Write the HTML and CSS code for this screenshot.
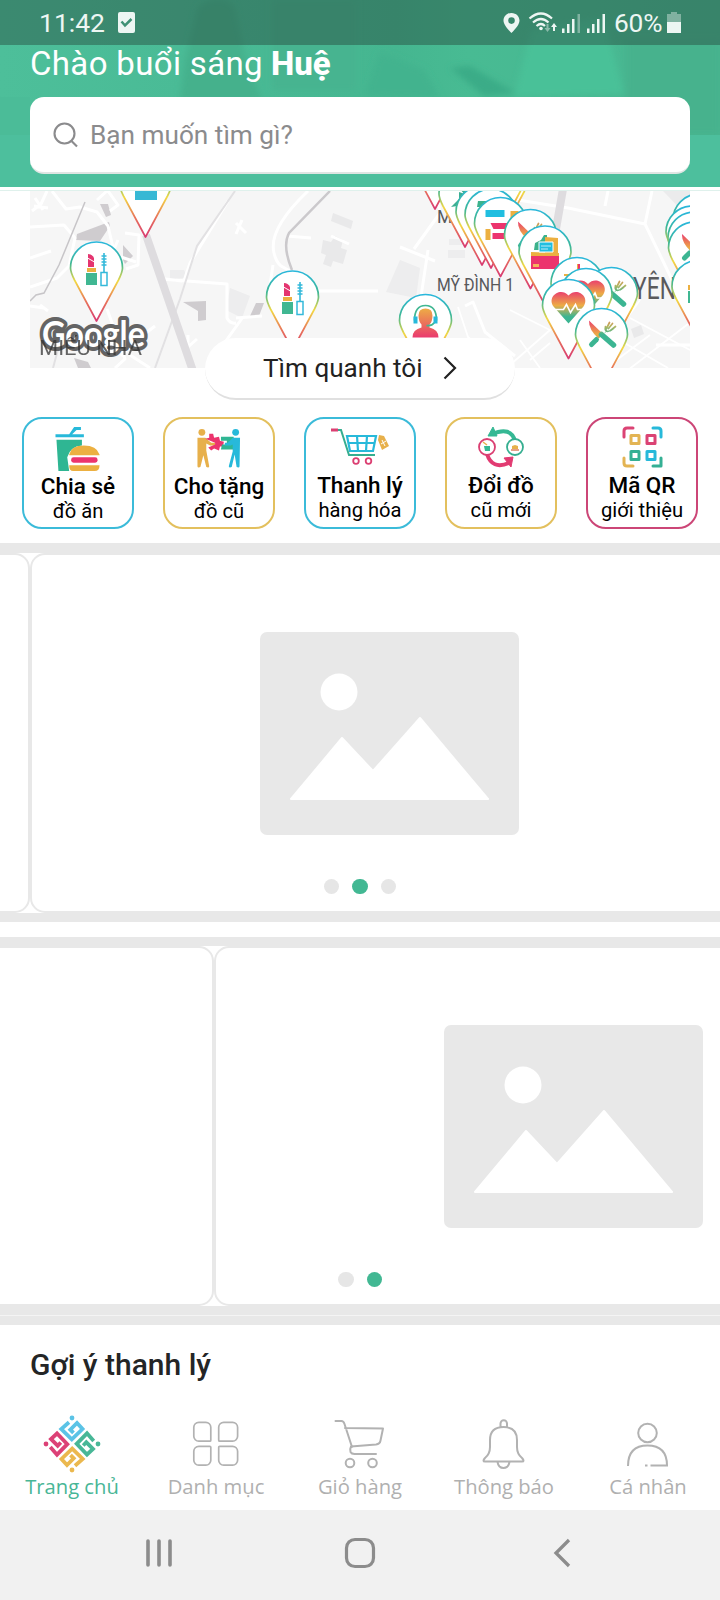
FILE: index.html
```
<!DOCTYPE html>
<html lang="vi">
<head>
<meta charset="utf-8">
<title>Trang chủ</title>
<link rel="stylesheet" href="styles.css">
</head>
<body>
<div class="phone">
  <header class="header">
    <svg class="header-photo" width="720" height="135" viewBox="0 0 720 135" aria-hidden="true">
      <defs>
        <linearGradient id="shade" x1="0" x2="1" y1="0" y2="0">
          <stop offset="0" stop-color="#4dbf9a"/><stop offset=".25" stop-color="#4abb96"/><stop offset=".55" stop-color="#45b690"/><stop offset=".65" stop-color="#48bb93"/><stop offset="1" stop-color="#48b590"/>
        </linearGradient>
        <filter id="soft"><feGaussianBlur stdDeviation="3"/></filter>
      </defs>
      <rect width="720" height="135" fill="url(#shade)"/>
      <g filter="url(#soft)">
        <path d="M185 60L198 8Q216-8 234 6L246 60 262 100H180z" fill="#44b18c"/>
        <path d="M272 0h84v90h-84z" fill="#46b490"/>
        <path d="M365 95L380 52 424 70 440 98z" fill="#42b38e"/>
        <path d="M450 68l20-2 46 27-32 3z" fill="#3bac87"/>
        <path d="M514 97L532 30 604 18 624 94z" fill="#4ac198"/>
        <path d="M626 40h94v95h-94z" fill="#46b28d"/>
      </g>
      <rect y="97" width="30" height="38" fill="#4bbc98"/>
    </svg>
    <div class="status">
      <span class="clock">11:42</span>
      <svg class="check" width="17" height="21" viewBox="0 0 17 21"><rect width="17" height="21" rx="2" fill="#edf6f3"/><path d="M3.500 9.500l3.500 4 6.500-6.500" fill="none" stroke="#3f9175" stroke-width="2.500"/></svg>
      <svg class="signals" width="104" height="24" viewBox="0 0 104 24" fill="#edf6f3">
        <path fill-rule="evenodd" d="M8.500 2C3.700 2 .5 5.600.5 9.800.5 14.500 8.500 22 8.500 22s8-7.500 8-12.200C16.500 5.600 13.300 2 8.500 2zm0 4.300a3.300 3.300 0 1 1 0 6.600 3.300 3.300 0 0 1 0-6.600z"/>
        <g fill="none" stroke="#edf6f3" stroke-width="2.200"><path d="M26.500 7.500Q38-2.500 49 7.500M30 11.500q8-7 15.500 0M33.500 15q4.500-4 8.500 0"/></g>
        <circle cx="38" cy="17.500" r="1.800"/>
        <path d="M51 12l-3 4h2v4h2v-4h2z"/><path d="M44.500 21l-3-4h2v-4h2v4h2z" opacity=".45"/>
        <rect x="59" y="17.500" width="2.500" height="4.500"/><rect x="64" y="13" width="2.500" height="9"/><rect x="69" y="8" width="2.500" height="14"/><rect x="74.500" y="3" width="2.500" height="19" opacity=".4"/>
        <rect x="84" y="17.500" width="2.500" height="4.500"/><rect x="89" y="13" width="2.500" height="9"/><rect x="94" y="8" width="2.500" height="14"/><rect x="99.500" y="3" width="2.500" height="19"/>
      </svg>
      <span class="percent">60%</span>
      <svg class="battery" width="14" height="21" viewBox="0 0 14 21"><path d="M4 0h6v2h4v9H0V2h4z" fill="#edf6f3" opacity=".4"/><path d="M0 10h14v11H0z" fill="#edf6f3"/></svg>
    </div>
    <h1 class="greeting"><span class="greet-text">Chào buổi sáng</span><b class="greet-name">Huệ</b></h1>
    <div class="search">
      <svg width="26" height="26" viewBox="0 0 26 26" fill="none" stroke="#8b8b8d" stroke-width="2.100"><circle cx="11.500" cy="11.500" r="10"/><path d="M18.500 19l5.500 5.500"/></svg>
      <span class="search-text">Bạn muốn tìm gì?</span>
    </div>
  </header>

  <section class="nearby">
    <svg class="map" width="660" height="177" viewBox="30 191 660 177">
      <defs>
        <linearGradient id="rim" x1="0" y1="0" x2="0" y2="1"><stop offset="0" stop-color="#29b7dc"/><stop offset=".27" stop-color="#3fb795"/><stop offset=".5" stop-color="#f2d843"/><stop offset=".75" stop-color="#e8745a"/><stop offset="1" stop-color="#d83a72"/></linearGradient>
        <linearGradient id="warm" gradientUnits="userSpaceOnUse" x1="0" y1="-16" x2="0" y2="16"><stop offset=".05" stop-color="#ea3a6f"/><stop offset=".5" stop-color="#edac45"/><stop offset=".85" stop-color="#3cb592"/></linearGradient>
        <linearGradient id="cool" gradientUnits="userSpaceOnUse" x1="0" y1="-18" x2="0" y2="10"><stop offset=".05" stop-color="#ec7a50"/><stop offset=".35" stop-color="#b5b560"/><stop offset=".65" stop-color="#3cb592"/></linearGradient>
        <linearGradient id="person" x1="0" y1="0" x2="0" y2="1"><stop offset="0" stop-color="#edac45"/><stop offset="1" stop-color="#ea3a6f"/></linearGradient>
        <path id="pin" d="M0 53L-22 12C-25 6-26 4-26 0A26 26 0 0 1 26 0C26 4 25 6 22 12z" fill="#fff" stroke="url(#rim)" stroke-width="1.700" stroke-linejoin="round"/>
        <g id="makeup">
          <path d="M-8.500-14q4 0 6 4v9h-6z" fill="#e43570"/><path d="M-9-10l7 4" stroke="#fff"/><path d="M-9.500 0h9v4h-9z" fill="#ecb041"/><path d="M-10.500 5h11v12h-11z" fill="#40b792"/>
          <path d="M7.500-15V4M5-12h5M5-9h5M5-6h5M5-3h5" stroke="#34b9da" stroke-width="1.600"/><rect x="4.500" y="4.500" width="6" height="13" fill="#fff" stroke="#34b9da" stroke-width="1.500"/>
        </g>
        <g id="food" stroke-linecap="round" fill="none">
          <path d="M-10 10L-5 5" stroke="url(#cool)" stroke-width="5"/><path d="M2-1l3-3M4-8q-1 5 2 5t6-3M8-12l-3 6M11-11l-4 5M14-8l-5 4" stroke="url(#cool)" stroke-width="1.700"/>
          <path d="M-11-12q0 6 7 11l4-2zM1 0L11 10" stroke="#fff" stroke-width="5"/>
          <path d="M-12.500-14Q-13-5-3 4l5-4z" fill="url(#warm)"/><path d="M0 0L12 10.500" stroke="url(#cool)" stroke-width="5.500"/>
        </g>
        <g id="heart"><path d="M0 18L-15 1C-22-9-8-19 0-10 8-19 22-9 15 1z" fill="url(#warm)"/><path d="M-16 4h11l3-5 4 8 5-8 2 5h8" fill="none" stroke="#fff" stroke-width="1.600"/></g>
        <g id="books"><path d="M-15-11H4v7h-19z" fill="#20bee0"/><path d="M10-10h8V10h-8zM-15 8h5v11h-5z" fill="#ecb041"/><path d="M-10 2H8v6H-7zM-8 12H5v6H-8z" fill="#ec346d"/></g>
      </defs>
      <rect x="30" y="191" width="660" height="177" fill="#f6f6f6"/>
      <g class="areas">
        <path d="M400 260l20 8-4 30-30-6zM448 250h17v8h-17zM449 239h15v6h-15zM170 270h14l4 8-18 1zM230 288l20 8-8 22-16-8z" fill="#ededee"/>
        <path d="M333 213l20 8-2 8-20-8zM323 240l8 2 4-6 8 4-2 8 6 2-4 14-10-3-2 6-8-3 3-9-5-2zM631 329l10-4 3 9-10 4z" fill="#e9e9ea"/>
        <path d="M663 191h27v28z" fill="#ebebec"/>
        <path d="M77 234l32-12 1 4-10 15-24-1zM100 204h8l3 11-5 2zM123 245l10 11-8 8-2-4zM183 302l23-1v19l-8 1v-10zM256 303h8l-5 13h-9zM74 358l14 4 3 6H78z" fill="#cfcccf"/>
      </g>
      <g fill="none" stroke="#fff" stroke-width="3" stroke-linejoin="round">
        <path d="M52 191l14 18 14-2 17 5 11 14 7 30 6 14M30 227l34-2 11 13-6 28-12 12-27 9M30 258l21-7M35 198l8 12M32 211l9-7 6-13M34 206l14 2M108 191l10 14-8 6M118 240l-6 14 24 8M125 233l14 2-1 30-12 4M97 200l10-9"/>
        <path d="M107 309l18 50-10 9M160 279l67 5v34q3 6 9 5M165 279l17 2M184 281l6-18 38-62M155 326l-18 14-16 16M130 355l20 13M30 306l14 2M243 317l-20 28-5 23M236 318l26-2M188 335v12l9-8M40 305l8 6"/>
        <path d="M308 191q-40 38-34 62 2 9 7 13l18 10M287 236l24 2M318 291h60M236 223l10 10M242 220l-6 14M690 345h-34M273 265l-3 20M331 236l18 8"/>
        <path d="M437 191l3 22-26 36M400 247l35 14M428 250l-9 60M420 340l32 28M518 200l50 8 77 16 7-33M605 206l3-15M645 224l30 62M465 306l8-4 12 30 30 24"/>
        <path d="M458 307l10 30 34 31M510 310l40 20-40 35M640 300l-36 50M650 335l-40 30M628 370l60-46M520 340l20 28M530 360l20-17M602 330l66 38M630 318l60 32" stroke-width="1.800"/>
      </g>
      <path d="M235 191l-38 55-9 28-8 25-25 69M60 342l-7 26" fill="none" stroke="#e2e1e3" stroke-width="2"/>
      <path d="M85 202L59 265 44 293 36 295 30 301" fill="none" stroke="#c7c5c8" stroke-width="1.500"/>
      <path d="M330 191l-41 42q-7 13 3 37" fill="none" stroke="#cbc9cc" stroke-width="2.500"/>
      <path d="M146 235L193 371M563 189l-7 40" fill="none" stroke="#dedcdf" stroke-width="8"/>
      <g class="map-labels">
        <text x="437" y="223">M</text>
        <text x="437" y="291" textLength="77" lengthAdjust="spacingAndGlyphs">MỸ ĐÌNH 1</text>
        <text x="633" y="299" class="big" textLength="43" lengthAdjust="spacingAndGlyphs">YÊN</text>
      </g>
      <use href="#pin" x="145.500" y="184"/><path d="M135 190h22v10h-22z" fill="#36b8d4"/>
      <use href="#pin" x="96.500" y="268"/><use href="#makeup" x="96.500" y="268"/>
      <use href="#pin" x="292.500" y="297"/><use href="#makeup" x="292.500" y="297"/>
      <use href="#pin" x="425.500" y="320.500"/>
      <g transform="translate(425.500 320.500)"><path d="M-13 17Q-13 9-4 7V4Q-7 1-7-5-7-12 0-12T7-5Q7 1 4 4V7Q13 9 13 17z" fill="url(#person)"/><path d="M-11 0q0-15 11-15t11 15M9 2q-3 4-8 3" fill="none" stroke="#40b792" stroke-width="1.700"/><path d="M-12-4h4v7h-4zM8-4h4v7H8z" fill="#27b9da"/></g>
      <use href="#pin" x="502" y="180"/><use href="#pin" x="498" y="180"/>
      <use href="#pin" x="435" y="156"/>
      <use href="#pin" x="465" y="194"/>
      <path d="M451 207l8-8v-7l6 2-4 9-4 3zM460 189h8l-3 6z" fill="#3cae91"/>
      <use href="#pin" x="482" y="212"/><use href="#pin" x="491" y="215"/><path d="M478 201h9v6h-10z" fill="#3cb28c"/>
      <use href="#pin" x="500.500" y="223.500"/><use href="#books" x="500.500" y="221"/>
      <use href="#pin" x="530.500" y="235.500"/><use href="#food" x="530.500" y="235.500"/>
      <use href="#pin" x="545" y="252"/>
      <g transform="translate(545 252)"><path d="M-10-9L-4-12-1-17h3v15h-13z" fill="#3cb28c"/><path d="M0-15l13 1v18H0z" fill="#ecb041"/><path d="M-14 0l28 1v3h-28z" fill="#ecb041"/><path d="M-6-10h14v10H-6z" fill="#20bee0" stroke="#fff"/><path d="M-4-6h10M-4-3h7" stroke="#bdeaf5"/><path d="M-14 4h28v13h-28z" fill="#ec346d"/><path d="M-12 12h6v3h-6z" fill="#f4b55c"/></g>
      <use href="#pin" x="577" y="283.500"/><path d="M564 275h14v-11" fill="none" stroke="#ecb041" stroke-width="2"/><path d="M579 264v12" stroke="#ec346d" stroke-width="2"/>
      <use href="#pin" x="611.500" y="293.500"/><use href="#food" x="611.500" y="293.500"/>
      <use href="#pin" x="586" y="294.500"/><use href="#heart" x="588" y="294"/>
      <use href="#pin" x="568.500" y="305.500"/><use href="#heart" x="568.500" y="305.500"/>
      <use href="#pin" x="601.500" y="334.500"/><use href="#food" x="601.500" y="334.500"/>
      <use href="#pin" x="699" y="220"/><use href="#pin" x="692" y="232"/><use href="#pin" x="694" y="238"/><use href="#pin" x="694.500" y="248"/><use href="#food" x="694.500" y="248"/>
      <use href="#pin" x="698" y="286.500"/><path d="M688 291h4v12h-4z" fill="#40b792"/><path d="M688 285h4v5h-4z" fill="#ecb041"/>
      <text class="google" x="42" y="347" textLength="103" lengthAdjust="spacingAndGlyphs">Google</text>
      <text class="mile" x="39" y="355" textLength="103" lengthAdjust="spacingAndGlyphs">MIẾU NHA</text>
    </svg>
    <div class="around"><span>Tìm quanh tôi</span><svg width="14" height="24" viewBox="0 0 14 24"><path d="M1.500 1.500L12 12 1.500 22.500" fill="none" stroke="#222" stroke-width="2.200"/></svg></div>
  </section>

  <nav class="tiles">
    <div class="tile blue low">
      <svg width="46" height="47" viewBox="0 0 46 47"><path d="M0 8.500h29v3H0zM14 8.500l5-7.500h7v3h-4.500L17 8.500z" fill="#27b9da"/><path d="M1 14h26v6q-12 1-15 12l2 14H3z" fill="#2fb693"/><path d="M14 29q2-9 15-9t16 9v1H14zM14 40h31q0 6-5 6H18q-4 0-4-6z" fill="#ecb041"/><rect x="16" y="32" width="27" height="5.500" rx="2.500" fill="#ec346d"/></svg>
      <b>Chia sẻ</b><span>đồ ăn</span>
    </div>
    <div class="tile gold low">
      <svg width="46" height="47" viewBox="0 0 46 47"><g transform="translate(0 2)"><circle cx="5.500" cy="4.500" r="3.500" fill="#e7b04b"/><path d="M1 10h8l6 5h4v3h-5l-4-2v7l3 16q0 2-3 1L7 28 4 40q-3 1-3-1z" fill="#e7b04b"/><path d="M9 11l4-1 0-4 4 0 1 4 5-1 1 4 4 1-1 5-3 0-1 4-5-2-3 2-3-3 7-3v-2z" fill="#ec346d"/><path d="M25 9h13v13H25l1-5h5v-4h-6z" fill="#2fb693"/><circle cx="40" cy="4.500" r="3.500" fill="#27b9da"/><path d="M44.500 10H37l-5 5h-3v3h6l2-1v7l-4 15q0 2 3 1l3-13 2 13q3 1 3-1z" fill="#27b9da"/></g></svg>
      <b>Cho tặng</b><span>đồ cũ</span>
    </div>
    <div class="tile blue">
      <svg width="60" height="46" viewBox="0 0 60 46" fill="none"><path d="M1 4h7" stroke="#db3f72" stroke-width="3"/><path d="M8 4h3l8 25h26" stroke="#35ae90" stroke-width="2"/><path d="M17 10h29l-3 15H20zM18 17h27M27 10l1 15M37 10l-1 15" stroke="#27b9da" stroke-width="2.200"/><circle cx="26" cy="35" r="2.800" stroke="#db3f72" stroke-width="1.800"/><circle cx="38.500" cy="35" r="2.800" stroke="#db3f72" stroke-width="1.800"/><path d="M49 9l5 1 5 10-7 4-4-10z" fill="#e7b04b"/><path d="M51 18l5-3M52 14l3 6" stroke="#fff"/></svg>
      <b>Thanh lý</b><span>hàng hóa</span>
    </div>
    <div class="tile gold">
      <svg width="46" height="46" viewBox="0 0 46 46"><path d="M14 8q19-8 23 7" fill="none" stroke="#35b894" stroke-width="4"/><path d="M10 10L15 1l4 9z" fill="#35b894" stroke="#35b894"/><path d="M9 28q5 16 22 9" fill="none" stroke="#e23b72" stroke-width="4"/><path d="M26 32l9-1-2 10z" fill="#e23b72" stroke="#e23b72"/><circle cx="9" cy="21" r="8" fill="#fff" stroke="#db3f72" stroke-width="1.800"/><circle cx="37" cy="21" r="8" fill="#fff" stroke="#35ae90" stroke-width="1.800"/><path d="M6 20h6v5H7z" fill="#35b894"/><path d="M5 16l4 3" stroke="#e7b04b" stroke-width="1.500"/><path d="M34 20l3-1 3 1v3h-6z" fill="#e7b04b"/><path d="M33 24h8" stroke="#db8060" stroke-width="1.500"/></svg>
      <b>Đổi đồ</b><span>cũ mới</span>
    </div>
    <div class="tile pink">
      <svg width="46" height="46" viewBox="0 0 46 46" fill="none" stroke-width="3" stroke-linecap="round" stroke-linejoin="round"><g transform="translate(3 0)"><path d="M2 11V5q0-3 3-3h6" stroke="#db4374"/><path d="M31 2h5q3 0 3 3v6" stroke="#27b9da"/><path d="M2 32v5q0 3 3 3h6" stroke="#e3b453"/><path d="M31 40h8v-8" stroke="#35b094"/><rect x="9" y="9.500" width="8" height="8" stroke="#e3b453"/><rect x="25" y="9.500" width="8" height="8" stroke="#db4374"/><rect x="9" y="25.500" width="8" height="8" stroke="#35b094"/><rect x="25" y="25.500" width="8" height="8" stroke="#27b9da"/></g></svg>
      <b>Mã QR</b><span>giới thiệu</span>
    </div>
  </nav>

  <div class="band"></div>
  <section class="carousel first">
    <div class="slide"></div>
    <div class="slide"><svg class="placeholder" width="259" height="203" viewBox="0 0 259 203"><rect width="259" height="203" rx="7" fill="#e8e8e8"/><circle cx="79" cy="60" r="18.500" fill="#fff"/><path d="M31 167L82 106l31 33 47-53 68 81z" fill="#fff" stroke="#fff" stroke-width="2" stroke-linejoin="round"/></svg></div>
    <div class="dots"><i></i><i class="on"></i><i></i></div>
  </section>
  <div class="band after"></div>
  <div class="band before"></div>
  <section class="carousel second">
    <div class="slide"></div>
    <div class="slide"><svg class="placeholder" width="259" height="203" viewBox="0 0 259 203"><rect width="259" height="203" rx="7" fill="#e8e8e8"/><circle cx="79" cy="60" r="18.500" fill="#fff"/><path d="M31 167L82 106l31 33 47-53 68 81z" fill="#fff" stroke="#fff" stroke-width="2" stroke-linejoin="round"/></svg></div>
    <div class="dots"><i></i><i class="on"></i></div>
  </section>
  <div class="closing"><div class="band"></div><div class="band"></div></div>

  <h2 class="suggest">Gợi ý thanh lý</h2>

  <nav class="tabs">
    <div class="tab active">
      <svg width="60" height="60" viewBox="-30 -30 60 60">
        <defs><path id="g" d="M-3-21.700L-10.700-15-.2-4.700 10.500-15 5-21-1.700-14.300 1.500-11.200" fill="none" stroke-width="3.800"/></defs>
        <use href="#g" stroke="#5bc3e6"/><use href="#g" stroke="#48b797" transform="rotate(90)"/><use href="#g" stroke="#ebb84e" transform="rotate(180)"/><use href="#g" stroke="#dc4176" transform="rotate(270)"/>
        <circle cy="-26" r="2.400" fill="#5bc3e6"/><circle cx="26" r="2.400" fill="#48b797"/><circle cy="26" r="2.400" fill="#ebb84e"/><circle cx="-26" r="2.400" fill="#dc4176"/>
      </svg><span>Trang chủ</span></div>
    <div class="tab">
      <svg width="60" height="60" viewBox="0 0 60 60" fill="none" stroke="#b2b2b2" stroke-width="1.700"><path d="M12.800 8.300h7a5 5 0 0 1 5 5v12.900a1 1 0 0 1-1 1H12.800a5 5 0 0 1-5-5v-8.900a5 5 0 0 1 5-5zM37.700 8.300h8.900a5 5 0 0 1 5 5v8.900a5 5 0 0 1-5 5H33.700a1 1 0 0 1-1-1V13.300a5 5 0 0 1 5-5zM12.800 32.300h11a1 1 0 0 1 1 1v12.900a5 5 0 0 1-5 5h-7a5 5 0 0 1-5-5v-8.900a5 5 0 0 1 5-5zM33.700 32.300h12.900a5 5 0 0 1 5 5v8.900a5 5 0 0 1-5 5h-8.900a5 5 0 0 1-5-5V33.300a1 1 0 0 1 1-1z"/></svg>
      <span>Danh mục</span></div>
    <div class="tab">
      <svg width="60" height="60" viewBox="0 0 60 60" fill="none" stroke="#b2b2b2" stroke-width="2" stroke-linejoin="round" stroke-linecap="round"><path d="M5.500 7h6q2 0 3 3l7.500 23M15 14l38 .5-2.500 12Q50 30 46 30.500L21 32.500q-1.500 3-.5 5.500 1 2 4 2h21.500"/><circle cx="20" cy="49" r="4.300"/><circle cx="42.500" cy="49" r="4.300"/></svg>
      <span>Giỏ hàng</span></div>
    <div class="tab">
      <svg width="60" height="60" viewBox="0 0 60 60" fill="none" stroke="#b2b2b2" stroke-width="2" stroke-linejoin="round"><path d="M26.500 13V9.500a3 3 0 0 1 6.500 0V13M16 26q0-13 13.500-13T43 26v7q0 7 5 11 3 3.500 0 3.500H11q-3 0 0-3.500 5-4 5-11zM23.500 48q1 6 6 6t6-6"/></svg>
      <span>Thông báo</span></div>
    <div class="tab">
      <svg width="60" height="60" viewBox="0 0 60 60" fill="none" stroke="#b2b2b2" stroke-width="2"><circle cx="29.500" cy="19" r="9.300"/><path d="M10 52q0-20.500 19.500-20.500T49 51.500H32.500M27 51.500h2.500"/></svg>
      <span>Cá nhân</span></div>
  </nav>

  <footer class="system">
    <svg width="30" height="30" viewBox="0 0 30 30" stroke="#8c8c8c" stroke-width="3.600" stroke-linecap="round"><path d="M4 3v24M15 3v24M26 3v24"/></svg>
    <svg width="32" height="32" viewBox="0 0 32 32" fill="none" stroke="#8c8c8c" stroke-width="3.200"><rect x="2.500" y="2.500" width="27" height="27" rx="8.500"/></svg>
    <svg width="30" height="30" viewBox="0 0 30 30" fill="none" stroke="#8c8c8c" stroke-width="3.300"><path d="M23 2L10 15l13 13"/></svg>
  </footer>
</div>
</body>
</html>
```
FILE: styles.css
```
body { margin: 0; background: #fff; }
* { box-sizing: border-box; }
svg { display: block; flex: none; }
.phone { width: 720px; height: 1600px; overflow: hidden; display: flex; flex-direction: column; font-family: Roboto, "Noto Sans", sans-serif; background: #fff; }
.phone > * { flex: none; }

.header { position: relative; height: 187px; background: #4dbf9d; }
.header-photo { position: absolute; left: 0; top: 0; }
.header > :not(.header-photo) { position: relative; }
.status { display: flex; align-items: center; height: 45px; padding-left: 39px; background: rgba(35, 65, 55, .42); color: #edf6f3; font-size: 26.500px; }
.clock { width: 79px; white-space: nowrap; }
.signals { margin-left: 368px; }
.percent { width: 52px; margin-left: 7px; font-size: 26.300px; white-space: nowrap; letter-spacing: -.2px; }
.battery { margin-left: 1px; }
.greeting { display: flex; margin: 0; padding-left: 30px; height: 52px; color: #fff; font-weight: 400; font-size: 33px; line-height: 38px; white-space: nowrap; }
.greet-text { width: 241px; letter-spacing: .35px; }
.greet-name { font-weight: 800; letter-spacing: 0; }
.search { display: flex; align-items: center; gap: 11px; width: 660px; height: 77px; margin-left: 30px; padding: 1px 0 0 23px; background: #fff; border-radius: 14px; border-bottom: 2px solid #dfe5e3; color: #8b8b8d; font-size: 26.200px; }

.nearby { height: 226px; padding: 4px 30px 0; background: linear-gradient(#fff 3px, #dff1ec 3px, #dff1ec 4px, #fff 4px); }
.map-labels { font-size: 17.500px; fill: #58595b; }
.big { font-size: 31px; fill: #5a5a5c; }
.mile { font-size: 20px; fill: #333; opacity: .75; }
.google { font-family: Lato, "Noto Sans", sans-serif; font-weight: 700; font-size: 37px; fill: #fff; stroke: #646464; stroke-width: 8px; stroke-linejoin: round; paint-order: stroke; }
.around { position: relative; display: flex; align-items: center; gap: 20px; width: 310px; height: 62px; margin: -30px 0 0 175px; padding: 0 0 1px 58px; background: #fff; border-radius: 31px; border-bottom: 2px solid #e0e0e0; color: #222; font-size: 26.100px; white-space: nowrap; }

.tiles { display: flex; gap: 29px; padding: 4px 0 0 22px; height: 130px; }
.tile { display: flex; flex-direction: column; align-items: center; width: 112px; height: 112px; padding-top: 7px; border: 2px solid; border-radius: 20px; color: #000; white-space: nowrap; }
.tile.blue { border-color: #3bbbd9; }
.tile.gold { border-color: #e3c05e; }
.tile.pink { border-color: #cc4677; }
.tile b { font-weight: 500; font-size: 22.500px; line-height: 26px; }
.tile span { font-size: 20.200px; line-height: 24px; }
.tile.low b { margin-top: 1px; }
.tile svg { height: 46px; }

.band { height: 9.500px; background: #e8e8e8; }
.carousel { position: relative; display: flex; height: 360px; overflow: hidden; background: #fff; }
.slide { flex: none; display: flex; align-items: center; justify-content: center; width: 720px; padding-right: 1px; border: 2px solid #e8e8e8; border-radius: 15px; }
.first .slide:first-child { margin-left: -690px; }
.second .slide:first-child { margin-left: -506px; }
.dots { position: absolute; left: 0; right: 0; bottom: 19px; display: flex; justify-content: center; gap: 13px; }
.dots i { width: 15.500px; height: 15.500px; border-radius: 50%; background: #e6e6e6; }
.dots .on { background: #42b893; }
.first { margin-top: .5px; }
.after { height: 10px; margin: -1px 0 15px; }
.before { height: 9px; }
.second { height: 360px; }
.closing { display: flex; flex-direction: column; gap: 1px; height: 20px; margin-top: -1px; background: #f4f4f4; }
.closing .band { flex: 1; }

.suggest { margin: 0; height: 75px; padding: 20px 0 0 30px; color: #242526; font-size: 30px; font-weight: 500; line-height: 40px; }
.tabs { display: flex; height: 110px; padding-top: 13.500px; }
.tab { display: flex; flex-direction: column; align-items: center; width: 144px; color: #b0b0b0; font-family: "Open Sans", "Noto Sans", sans-serif; font-size: 20.200px; line-height: 25px; font-weight: 500; white-space: nowrap; }
.active { color: #48b696; }
.system { display: flex; align-items: center; height: 90px; padding: 0 144px 4px; justify-content: space-between; background: #f1f1f1; }
```
